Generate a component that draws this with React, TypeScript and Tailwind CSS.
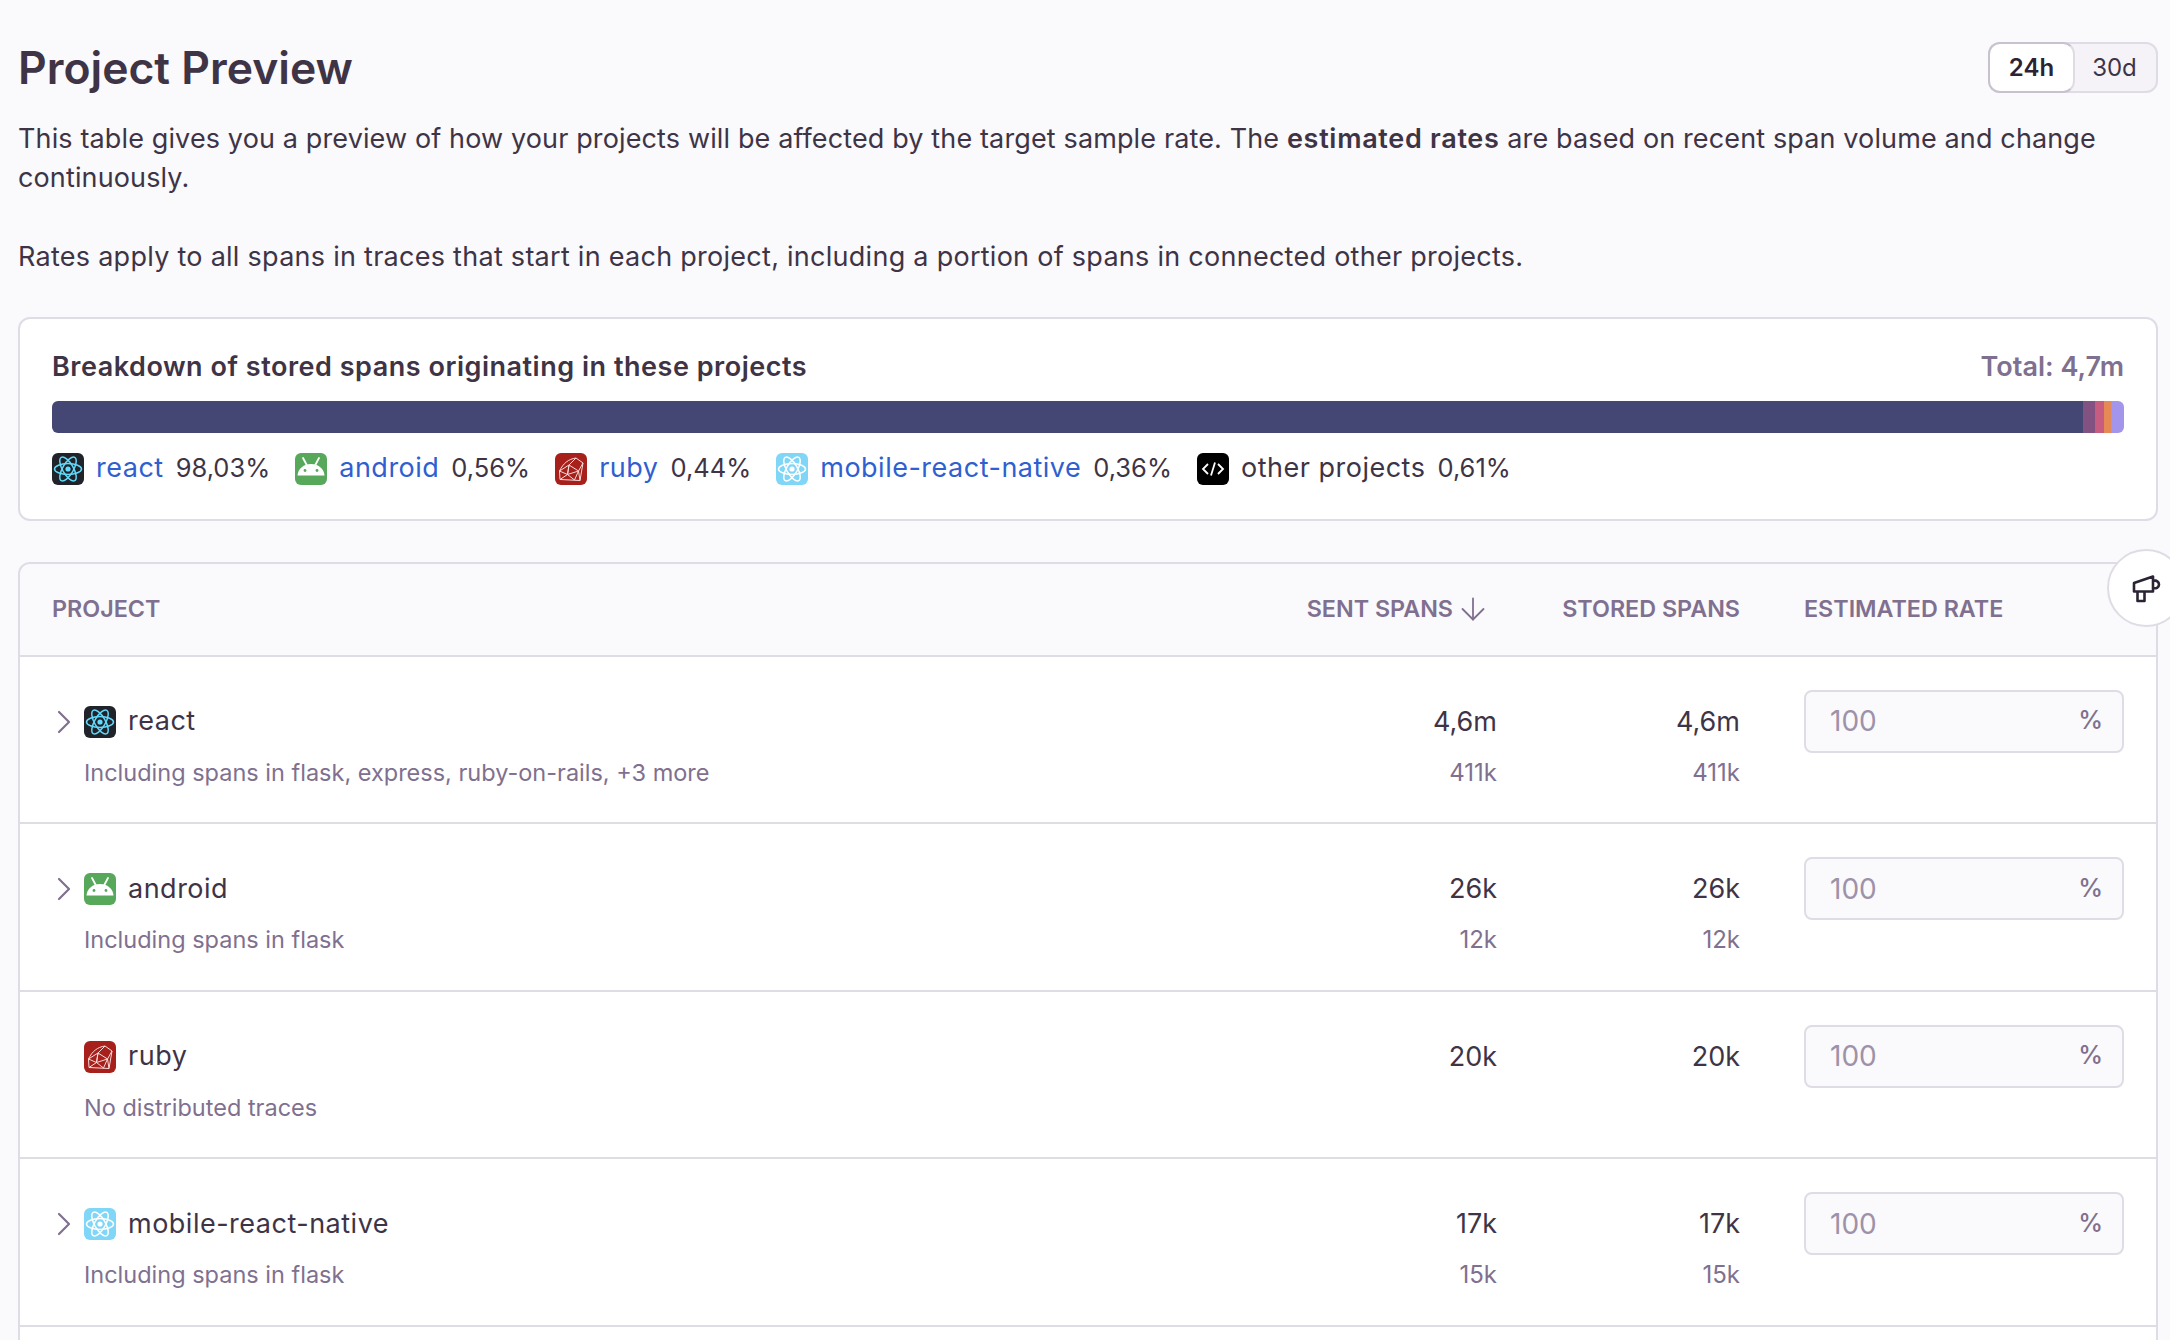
import { ArrowDown, ChevronRight } from 'lucide-react';

type IconKind = 'react' | 'android' | 'ruby' | 'native' | 'other';

function Atom({ color }: { color: string }) {
    return (
        <>
            <g fill="none" stroke={color} strokeWidth="1.5">
                <ellipse cx="16" cy="16" rx="13.5" ry="5.4" />
                <ellipse cx="16" cy="16" rx="13.5" ry="5.4" transform="rotate(60 16 16)" />
                <ellipse cx="16" cy="16" rx="13.5" ry="5.4" transform="rotate(120 16 16)" />
            </g>
            <circle cx="16" cy="16" r="2.6" fill={color} />
        </>
    );
}

function ProjectIcon({ kind }: { kind: IconKind }) {
    return (
        <svg width="32" height="32" viewBox="0 0 32 32" className="shrink-0">
            {kind === 'react' && (
                <>
                    <rect width="32" height="32" rx="6" fill="#20232a" />
                    <Atom color="#61dafb" />
                </>
            )}
            {kind === 'native' && (
                <>
                    <rect width="32" height="32" rx="6" fill="#7fd6f7" />
                    <Atom color="#ffffff" />
                </>
            )}
            {kind === 'android' && (
                <>
                    <rect width="32" height="32" rx="6" fill="#58a85c" />
                    <path d="M2.500 22.500C3 15.500 8.800 11 16 11s13 4.500 13.500 11.500Z" fill="#fff" />
                    <path d="M8 5l4 7.500M24 5l-4 7.500" stroke="#fff" strokeWidth="1.8" strokeLinecap="round" />
                    <circle cx="10" cy="17.500" r="1.400" fill="#58a85c" />
                    <circle cx="22" cy="17.500" r="1.400" fill="#58a85c" />
                </>
            )}
            {kind === 'ruby' && (
                <>
                    <rect width="32" height="32" rx="6" fill="#a8201c" />
                    <path
                        d="M21 5C13.500 6 8 10.500 4.500 18l.5 8.500L25 27.500l3-17.500zM21 5l-7 7 9.500 6 4.500-8M14 12L4.500 18l8 3.500L14 12zM14 12l-1.500 9.500 11-3.500M12.500 21.500L5 26.500M12.500 21.500l7 5.500 4-9 1.500 9.500"
                        fill="none"
                        stroke="#f3dcd9"
                        strokeWidth="1"
                    />
                </>
            )}
            {kind === 'other' && (
                <>
                    <rect width="32" height="32" rx="6" fill="#000" />
                    <path
                        d="M11 11l-5 5 5 5M21 11l5 5-5 5M18 9.500l-4 13"
                        fill="none"
                        stroke="#fff"
                        strokeWidth="1.8"
                    />
                </>
            )}
        </svg>
    );
}

const legend: { name: string; pct: string; kind: IconKind; link: boolean }[] = [
    { name: 'react', pct: '98,03%', kind: 'react', link: true },
    { name: 'android', pct: '0,56%', kind: 'android', link: true },
    { name: 'ruby', pct: '0,44%', kind: 'ruby', link: true },
    { name: 'mobile-react-native', pct: '0,36%', kind: 'native', link: true },
    { name: 'other projects', pct: '0,61%', kind: 'other', link: false },
];

const rows: { name: string; kind: IconKind; sub: string; count: string; incl: string; expand: boolean }[] = [
    { name: 'react', kind: 'react', sub: 'Including spans in flask, express, ruby-on-rails, +3 more', count: '4,6m', incl: '411k', expand: true },
    { name: 'android', kind: 'android', sub: 'Including spans in flask', count: '26k', incl: '12k', expand: true },
    { name: 'ruby', kind: 'ruby', sub: 'No distributed traces', count: '20k', incl: '', expand: false },
    { name: 'mobile-react-native', kind: 'native', sub: 'Including spans in flask', count: '17k', incl: '15k', expand: true },
];

function App() {
    return (
        <div className="relative h-[1340px] overflow-hidden bg-[#faf9fb] pl-[18px] pr-[12px] font-['Inter',sans-serif] text-[27px] text-[#3e3446]">
            <header className="flex h-[93px] items-start justify-between">
                <h1 className="mt-[43px] text-[44.500px] leading-[50px] font-semibold">Project Preview</h1>
                <div className="mt-[42px] flex h-[51px] w-[170px] rounded-[12px] border-2 border-[#e0dce5] bg-[#f5f3f7] text-[24px]">
                    <div className="-m-[2px] flex w-[87px] items-center justify-center rounded-[12px] border-2 border-[#c8c2d0] border-r-[#e0dce5] bg-white font-semibold text-[#2b2233]">
                        24h
                    </div>
                    <div className="flex flex-1 items-center justify-center">30d</div>
                </div>
            </header>

            <p className="mt-[26px] leading-[39px] tracking-[0.13px]">
                This table gives you a preview of how your projects will be affected by the target sample rate. The{' '}
                <strong className="font-semibold tracking-[0.7px]">estimated rates</strong> are based on recent span volume and change continuously.
            </p>
            <p className="mt-[40px] leading-[39.5px] tracking-[0.27px]">
                Rates apply to all spans in traces that start in each project, including a portion of spans in connected other projects.
            </p>

            <section className="mt-[40px] h-[204px] rounded-[12px] border-2 border-[#e0dce5] bg-white px-[32px] pt-[33px]">
                <div className="flex h-[32px] items-center justify-between font-semibold">
                    <span className="tracking-[0.52px]">Breakdown of stored spans originating in these projects</span>
                    <span className="text-[#80708f]">Total: 4,7m</span>
                </div>
                <div className="mt-[17px] flex h-[32px] overflow-hidden rounded-[6px]">
                    <div className="w-[98.03%] bg-[#444674]" />
                    <div className="w-[0.56%] bg-[#825283]" />
                    <div className="w-[0.44%] bg-[#c75b80]" />
                    <div className="w-[0.36%] bg-[#e58956]" />
                    <div className="w-[0.61%] bg-[#a395ec]" />
                </div>
                <div className="mt-[20px] flex gap-[25px]">
                    {legend.map((item) => (
                        <div key={item.name} className="flex h-[32px] items-center">
                            <ProjectIcon kind={item.kind} />
                            <span className={`ml-[12px] tracking-[0.5px] ${item.link ? 'text-[#2f5fd0]' : ''}`}>{item.name}</span>
                            <span className="ml-[12px] text-[25.500px]">{item.pct}</span>
                        </div>
                    ))}
                </div>
            </section>

            <section className="mt-[41px] rounded-t-[12px] border-x-2 border-t-2 border-[#e0dce5] bg-white">
                <div className="flex h-[93px] items-center rounded-t-[12px] border-b-2 border-[#e0dce5] bg-[#faf9fb] pr-[32px] pl-[32px] text-[23.300px] font-semibold text-[#80708f] uppercase">
                    <div className="flex-1">Project</div>
                    <div className="flex w-[243px] items-center justify-end gap-[2px] pr-[6px]">
                        Sent Spans
                        <ArrowDown size={36} strokeWidth={1.2} />
                    </div>
                    <div className="w-[243px] text-right">Stored Spans</div>
                    <div className="ml-[64px] w-[320px]">Estimated Rate</div>
                </div>
                {rows.map((row) => (
                    <div key={row.name} className="flex h-[167.500px] border-b-2 border-[#e0dce5] pt-[33px] pr-[32px] pl-[32px]">
                        <div className="flex-1">
                            <div className="flex h-[64px] items-center">
                                <span className="flex w-[32px] shrink-0 items-center text-[#80708f]">
                                    {row.expand && <ChevronRight size={40} strokeWidth={1.3} className="-ml-[8px]" />}
                                </span>
                                <ProjectIcon kind={row.kind} />
                                <span className="ml-[12px] tracking-[0.5px]">{row.name}</span>
                            </div>
                            <div className="mt-[3px] ml-[32px] text-[23.500px] leading-[32px] text-[#80708f]">{row.sub}</div>
                        </div>
                        <div className="w-[243px] text-right">
                            <div className="leading-[64px]">{row.count}</div>
                            <div className="mt-[3px] text-[24px] leading-[32px] text-[#80708f]">{row.incl}</div>
                        </div>
                        <div className="w-[243px] text-right">
                            <div className="leading-[64px]">{row.count}</div>
                            <div className="mt-[3px] text-[24px] leading-[32px] text-[#80708f]">{row.incl}</div>
                        </div>
                        <div className="ml-[64px] flex h-[63px] w-[320px] items-center justify-between rounded-[8px] border-2 border-[#e0dce5] bg-[#faf9fb] pr-[19px] pl-[24px] text-[#80708f]">
                            <span className="text-[28px] text-[#9d92a9]">100</span>
                            <span className="text-[25px] font-medium">%</span>
                        </div>
                    </div>
                ))}
                <div className="h-[80px]" />
            </section>

            <button className="absolute top-[549px] left-[2107px] flex h-[78px] w-[78px] items-center rounded-full border-2 border-[#e0dce5] bg-white pl-[22px]">
                <svg width="32" height="32" viewBox="0 0 32 32" fill="none" stroke="#2b2233" strokeWidth="2.6" strokeLinejoin="round">
                    <path d="M3 11l19-6.500v15L3 19.500zM6.500 19.500V29h7v-9M22 8.500c3.500-.5 6 1.500 6 4s-2.500 4.500-6 3.500" />
                </svg>
            </button>
        </div>
    );
}

export default App;
